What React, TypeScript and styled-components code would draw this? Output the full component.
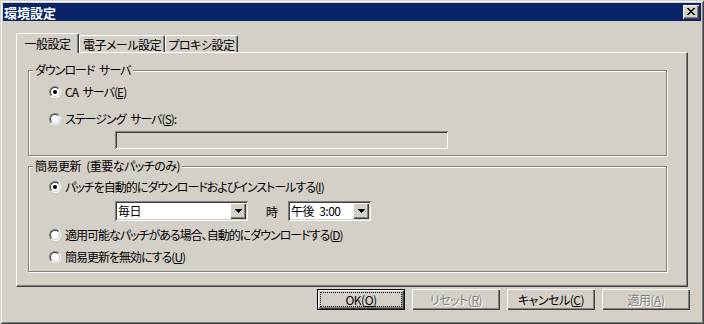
import React from 'react';
import styled, { createGlobalStyle, css } from 'styled-components';

const FACE = '#D4D0C8';
const SHADOW = '#808080';
const DARK = '#404040';
const LIGHT = '#FFFFFF';

const GlobalStyle = createGlobalStyle`
  * { box-sizing: border-box; }
  html, body { margin: 0; padding: 0; }
  body {
    background: ${FACE};
    font-family: "Noto Sans CJK JP", "Noto Sans", sans-serif;
    font-size: 12px;
    font-feature-settings: "palt";
    letter-spacing: -0.5px;
    word-spacing: 3px;
    color: #000;
  }
`;

const raised = css`
  box-shadow: inset 1px 1px 0 ${LIGHT}, inset -1px -1px 0 ${DARK},
    inset -2px -2px 0 ${SHADOW};
`;

const sunken = css`
  box-shadow: inset 1px 1px 0 ${SHADOW}, inset -1px -1px 0 ${LIGHT},
    inset 2px 2px 0 ${DARK}, inset -2px -2px 0 ${FACE};
`;

const Window = styled.div`
  width: 704px;
  height: 324px;
  padding: 3px;
  background: ${FACE};
  box-shadow: inset 1px 1px 0 ${FACE}, inset -1px -1px 0 ${DARK},
    inset 2px 2px 0 ${LIGHT}, inset -2px -2px 0 ${SHADOW};
  display: flex;
  flex-direction: column;
`;

const TitleBar = styled.div`
  height: 18px;
  background: #0a246a;
  display: flex;
  align-items: center;
  justify-content: space-between;
  padding: 0 2px 0 1px;
  color: #fff;
  font-weight: bold;
  font-size: 13px;
  letter-spacing: 0;
  line-height: 13px;
`;

const CloseButton = styled.div`
  width: 16px;
  height: 14px;
  background: ${FACE};
  ${raised};
  display: flex;
  align-items: center;
  justify-content: center;
  padding-bottom: 1px;
`;

const Body = styled.div`
  flex: 1;
  padding: 12px 13px 0 13px;
  display: flex;
  flex-direction: column;
`;

const TabRow = styled.div`
  display: flex;
  align-items: flex-end;
  height: 19px;
`;

const Tab = styled.div<{ $active?: boolean; $width: number }>`
  position: relative;
  width: ${p => p.$width}px;
  height: ${p => (p.$active ? 20 : 17)}px;
  margin-bottom: ${p => (p.$active ? -1 : 0)}px;
  z-index: ${p => (p.$active ? 1 : 0)};
  background: ${FACE};
  border-top: 1px solid ${LIGHT};
  border-left: 1px solid ${LIGHT};
  border-right: 1px solid ${DARK};
  border-radius: 2px 2px 0 0;
  box-shadow: inset -1px 0 0 ${SHADOW};
  display: flex;
  justify-content: center;
  padding-top: ${p => (p.$active ? 3 : 2)}px;
  line-height: 13px;
  white-space: nowrap;
`;

const Panel = styled.div`
  width: 672px;
  height: 235px;
  border: 1px solid;
  border-color: ${LIGHT} ${DARK} ${DARK} ${LIGHT};
  box-shadow: inset -1px -1px 0 ${SHADOW};
  padding: 11px 0 0 11px;
  display: flex;
  flex-direction: column;
  gap: 4px;
`;

const Group = styled.fieldset`
  width: 639px;
  margin: 0;
  padding: 0;
  border: 1px solid ${SHADOW};
  box-shadow: inset 1px 1px 0 ${LIGHT}, 1px 1px 0 ${LIGHT};
  min-inline-size: 0;
`;

const Legend = styled.legend<{ $tight?: boolean }>`
  margin-left: 4px;
  padding: 0 2px;
  line-height: 12px;
  height: 12px;
  background: ${FACE};
  white-space: nowrap;
  letter-spacing: ${p => (p.$tight ? -1 : -0.5)}px;
`;

const GroupContent = styled.div<{ $top: number }>`
  padding: ${p => p.$top}px 0 6px 20px;
  display: flex;
  flex-direction: column;
`;

const OptionRow = styled.label<{ $gap?: number }>`
  display: flex;
  align-items: center;
  height: 16px;
  gap: 4px;
  margin-top: ${p => p.$gap ?? 0}px;
  white-space: nowrap;
  line-height: 12px;
  letter-spacing: -1px;
`;

const RadioOuter = styled.span`
  width: 12px;
  height: 12px;
  border-radius: 50%;
  border: 1px solid;
  border-color: ${SHADOW} ${LIGHT} ${LIGHT} ${SHADOW};
  display: flex;
  flex-shrink: 0;
`;

const RadioInner = styled.span`
  flex: 1;
  border-radius: 50%;
  border: 1px solid;
  border-color: ${DARK} ${FACE} ${FACE} ${DARK};
  background: #fff;
  display: flex;
  align-items: center;
  justify-content: center;
`;

const RadioDot = styled.span`
  width: 4px;
  height: 4px;
  border-radius: 50%;
  background: #000;
`;

const Indented = styled.div<{ $gap: number }>`
  margin-left: 66px;
  margin-top: ${p => p.$gap}px;
  display: flex;
  align-items: center;
`;

const TextBox = styled.div`
  width: 333px;
  height: 18px;
  background: ${FACE};
  ${sunken};
`;

const Combo = styled.div<{ $width: number }>`
  width: ${p => p.$width}px;
  height: 20px;
  background: #fff;
  ${sunken};
  padding: 2px;
  display: flex;
  align-items: center;
`;

const ComboText = styled.span`
  flex: 1;
  padding-left: 1px;
  line-height: 14px;
  white-space: nowrap;
`;

const DropButton = styled.span`
  width: 16px;
  height: 16px;
  background: ${FACE};
  ${raised};
  display: flex;
  align-items: center;
  justify-content: center;
`;

const HourLabel = styled.span`
  margin: 0 10px 0 18px;
  width: 12px;
`;

const ButtonRow = styled.div`
  display: flex;
  justify-content: flex-end;
  gap: 7px;
  margin: 2px -2px 0 0;
`;

const Button = styled.div<{ $default?: boolean; $disabled?: boolean }>`
  width: 88px;
  height: 21px;
  background: ${FACE};
  display: flex;
  align-items: center;
  justify-content: center;
  line-height: 12px;
  white-space: nowrap;
  ${p =>
    p.$default
      ? css`
          border: 1px solid #000;
          padding: 2px;
          box-shadow: inset 1px 1px 0 ${LIGHT}, inset -1px -1px 0 ${DARK},
            inset -2px -2px 0 ${SHADOW};
        `
      : raised};
  ${p =>
    p.$disabled &&
    css`
      color: ${SHADOW};
      text-shadow: 1px 1px 0 ${LIGHT};
    `}
`;

const FocusRect = styled.span`
  flex: 1;
  align-self: stretch;
  border: 1px dotted #000;
  display: flex;
  align-items: center;
  justify-content: center;
`;

const CloseGlyph = () => (
  <svg width="8" height="7" viewBox="0 0 8 7" shapeRendering="crispEdges">
    <path
      d="M0 0h2v1H0zM6 0h2v1H6zM1 1h2v1H1zM5 1h2v1H5zM2 2h4v1H2zM3 3h2v1H3zM2 4h4v1H2zM1 5h2v1H1zM5 5h2v1H5zM0 6h2v1H0zM6 6h2v1H6z"
      fill="#000"
    />
  </svg>
);

const ArrowGlyph = () => (
  <svg width="7" height="4" viewBox="0 0 7 4" shapeRendering="crispEdges">
    <path d="M0 0h7v1H0zM1 1h5v1H1zM2 2h3v1H2zM3 3h1v1H3z" fill="#000" />
  </svg>
);

const Radio = ({ checked }: { checked?: boolean }) => (
  <RadioOuter>
    <RadioInner>{checked && <RadioDot />}</RadioInner>
  </RadioOuter>
);

export default function App() {
  return (
    <>
      <GlobalStyle />
      <Window>
        <TitleBar>
          <span>環境設定</span>
          <CloseButton>
            <CloseGlyph />
          </CloseButton>
        </TitleBar>
        <Body>
          <TabRow>
            <Tab $active $width={63}>一般設定</Tab>
            <Tab $width={86}>電子メール設定</Tab>
            <Tab $width={73}>プロキシ設定</Tab>
          </TabRow>
          <Panel>
            <Group>
              <Legend $tight>ダウンロード サーバ</Legend>
              <GroupContent $top={8}>
                <OptionRow>
                  <Radio checked />
                  <span>
                    CA サーバ(<u>E</u>)
                  </span>
                </OptionRow>
                <OptionRow $gap={11}>
                  <Radio />
                  <span>
                    ステージング サーバ(<u>S</u>):
                  </span>
                </OptionRow>
                <Indented $gap={4}>
                  <TextBox />
                </Indented>
              </GroupContent>
            </Group>
            <Group>
              <Legend>簡易更新 (重要なパッチのみ)</Legend>
              <GroupContent $top={7}>
                <OptionRow>
                  <Radio checked />
                  <span>
                    パッチを自動的にダウンロードおよびインストールする(<u>I</u>)
                  </span>
                </OptionRow>
                <Indented $gap={6}>
                  <Combo $width={133}>
                    <ComboText>毎日</ComboText>
                    <DropButton>
                      <ArrowGlyph />
                    </DropButton>
                  </Combo>
                  <HourLabel>時</HourLabel>
                  <Combo $width={83}>
                    <ComboText>午後 3:00</ComboText>
                    <DropButton>
                      <ArrowGlyph />
                    </DropButton>
                  </Combo>
                </Indented>
                <OptionRow $gap={6}>
                  <Radio />
                  <span>
                    適用可能なパッチがある場合、自動的にダウンロードする(<u>D</u>)
                  </span>
                </OptionRow>
                <OptionRow $gap={6}>
                  <Radio />
                  <span>
                    簡易更新を無効にする(<u>U</u>)
                  </span>
                </OptionRow>
              </GroupContent>
            </Group>
          </Panel>
          <ButtonRow>
            <Button $default>
              <FocusRect>
                <span>
                  OK(<u>O</u>)
                </span>
              </FocusRect>
            </Button>
            <Button $disabled>
              <span>
                リセット(<u>R</u>)
              </span>
            </Button>
            <Button>
              <span>
                キャンセル(<u>C</u>)
              </span>
            </Button>
            <Button $disabled>
              <span>
                適用(<u>A</u>)
              </span>
            </Button>
          </ButtonRow>
        </Body>
      </Window>
    </>
  );
}
